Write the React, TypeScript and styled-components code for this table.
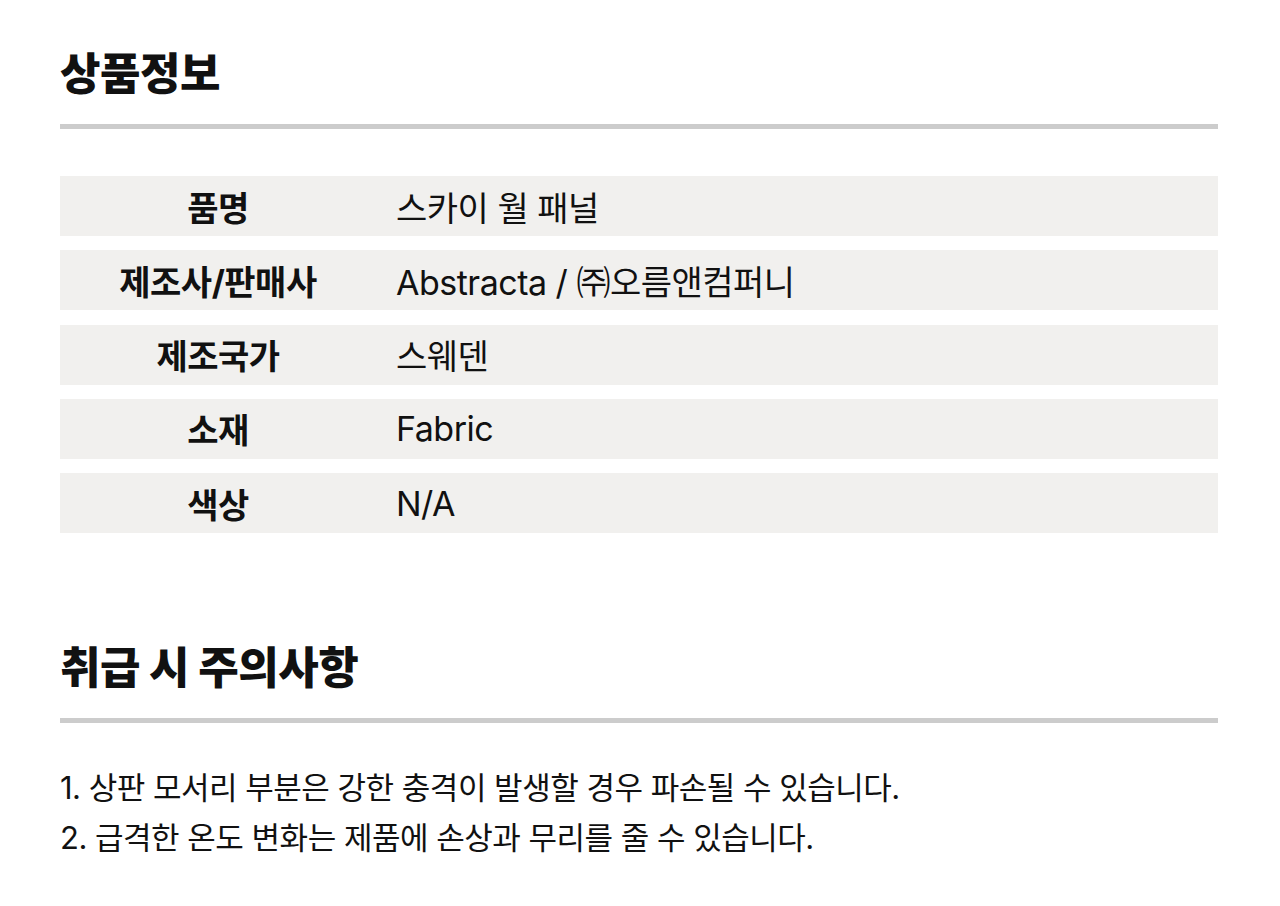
import React from 'react'
import styled, { createGlobalStyle } from 'styled-components'

const GlobalStyle = createGlobalStyle`
  html, body {
    margin: 0;
    padding: 0;
    background: #ffffff;
  }
  body {
    font-family: Inter, "Noto Sans CJK KR", "Noto Sans", sans-serif;
    color: #111111;
  }
`

const specs = [
  { label: '품명', value: '스카이 월 패널' },
  { label: '제조사/판매사', value: 'Abstracta / ㈜오름앤컴퍼니' },
  { label: '제조국가', value: '스웨덴' },
  { label: '소재', value: 'Fabric' },
  { label: '색상', value: 'N/A' },
]

const notes = [
  '상판 모서리 부분은 강한 충격이 발생할 경우 파손될 수 있습니다.',
  '급격한 온도 변화는 제품에 손상과 무리를 줄 수 있습니다.',
]

const App = () => {
  return (
    <>
      <GlobalStyle />
      <Page>
        <Section>
          <Heading>상품정보</Heading>
          <Divider />
          <SpecTable>
            {specs.map(({ label, value }) => (
              <SpecRow key={label}>
                <SpecLabel>{label}</SpecLabel>
                <SpecValue>{value}</SpecValue>
              </SpecRow>
            ))}
          </SpecTable>
        </Section>
        <Section>
          <Heading>취급 시 주의사항</Heading>
          <Divider />
          <Notes>
            {notes.map((note, i) => (
              <Note key={note}>
                {i + 1}. {note}
              </Note>
            ))}
          </Notes>
        </Section>
      </Page>
    </>
  )
}

export default App

const Page = styled.div`
  display: flex;
  flex-direction: column;
  gap: 108px;

  width: 1158px;
  padding: 47px 60px 40px;
`

const Section = styled.section`
  display: flex;
  flex-direction: column;
`

const Heading = styled.h2`
  margin: 0;

  font-size: 44px;
  font-weight: 800;
  line-height: 55px;
  letter-spacing: -0.5px;
  color: #111;
`

const Divider = styled.div`
  height: 5px;
  margin-top: 22px;

  background-color: #cccccc;
`

const SpecTable = styled.div`
  display: flex;
  flex-direction: column;
  gap: 14.3px;

  margin-top: 47px;
`

const SpecRow = styled.div`
  display: grid;
  grid-template-columns: 316px 1fr;
  align-items: center;

  height: 60px;
  background-color: #f1f0ee;
`

const SpecLabel = styled.div`
  text-align: center;

  font-size: 34px;
  font-weight: 700;
  letter-spacing: -0.5px;
  color: #111;
`

const SpecValue = styled.div`
  padding-left: 20px;

  font-size: 34px;
  font-weight: 400;
  letter-spacing: -0.5px;
  color: #111;
`

const Notes = styled.ol`
  list-style: none;

  margin: 0;
  margin-top: 40px;
  padding: 0;
`

const Note = styled.li`
  font-size: 31px;
  line-height: 50px;
  letter-spacing: -0.5px;
  color: #111;
`
